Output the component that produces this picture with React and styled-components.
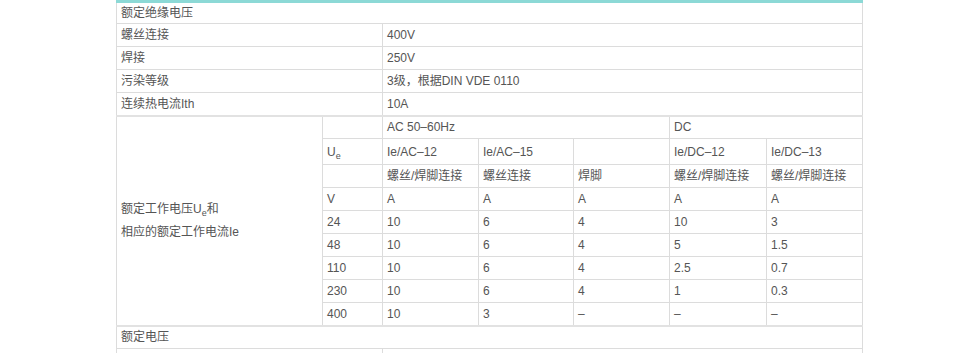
import React from 'react';
import styled, { createGlobalStyle } from 'styled-components';

const GlobalStyle = createGlobalStyle`
  html, body {
    margin: 0;
    padding: 0;
    background: #fff;
  }
  body {
    font-family: 'Liberation Sans', 'Noto Sans CJK SC', sans-serif;
  }
`;

const Page = styled.div`
  padding-left: 116px;
`;

const SpecTable = styled.table`
  width: 746px;
  table-layout: fixed;
  border-collapse: collapse;
  border-top: 3px solid #8cd9d6;
  font-size: 12px;
  color: #555;
`;

const Row = styled.tr`
  height: ${(p) => p.$h || 23}px;
`;

const Cell = styled.td`
  border: 1px solid #dcdcdc;
  border-bottom-width: ${(p) => (p.$thick ? 2 : 1)}px;
  border-bottom-color: ${(p) => (p.$thick ? '#e2e2e2' : '#dcdcdc')};
  padding: 0 4px;
  line-height: 14px;
  vertical-align: middle;
  text-align: left;
  white-space: nowrap;
  overflow: hidden;
`;

const GroupLabel = styled(Cell)`
  line-height: 23px;
`;

const Sub = styled.sub`
  font-size: 9px;
  vertical-align: -3px;
  line-height: 0;
`;

const cols = [206, 60, 96, 95, 96, 97, 96];

const simpleRows = [
  ['螺丝连接', '400V'],
  ['焊接', '250V'],
  ['污染等级', '3级，根据DIN VDE 0110'],
  ['连续热电流Ith', '10A'],
];

const dataRows = [
  ['24', '10', '6', '4', '10', '3'],
  ['48', '10', '6', '4', '5', '1.5'],
  ['110', '10', '6', '4', '2.5', '0.7'],
  ['230', '10', '6', '4', '1', '0.3'],
  ['400', '10', '3', '–', '–', '–'],
];

const Ue = () => (
  <>
    U<Sub>e</Sub>
  </>
);

export default function App() {
  return (
    <Page>
      <GlobalStyle />
      <SpecTable>
        <colgroup>
          {cols.map((w, i) => (
            <col key={i} style={{ width: w }} />
          ))}
        </colgroup>
        <tbody>
          <Row $h={22}>
            <Cell colSpan={7}>额定绝缘电压</Cell>
          </Row>
          {simpleRows.map(([label, value], i) => (
            <Row key={label}>
              <Cell colSpan={2} $thick={i === simpleRows.length - 1}>{label}</Cell>
              <Cell colSpan={5} $thick={i === simpleRows.length - 1}>{value}</Cell>
            </Row>
          ))}

          <Row>
            <GroupLabel rowSpan={dataRows.length + 4} $thick>
              额定工作电压<Ue />和
              <br />
              相应的额定工作电流Ie
            </GroupLabel>
            <Cell />
            <Cell colSpan={3}>AC 50–60Hz</Cell>
            <Cell colSpan={2}>DC</Cell>
          </Row>
          <Row $h={26}>
            <Cell><Ue /></Cell>
            <Cell>Ie/AC–12</Cell>
            <Cell>Ie/AC–15</Cell>
            <Cell />
            <Cell>Ie/DC–12</Cell>
            <Cell>Ie/DC–13</Cell>
          </Row>
          <Row>
            <Cell />
            <Cell>螺丝/焊脚连接</Cell>
            <Cell>螺丝连接</Cell>
            <Cell>焊脚</Cell>
            <Cell>螺丝/焊脚连接</Cell>
            <Cell>螺丝/焊脚连接</Cell>
          </Row>
          <Row>
            <Cell>V</Cell>
            <Cell>A</Cell>
            <Cell>A</Cell>
            <Cell>A</Cell>
            <Cell>A</Cell>
            <Cell>A</Cell>
          </Row>
          {dataRows.map((r, i) => (
            <Row key={r[0]}>
              {r.map((v, j) => (
                <Cell key={j} $thick={i === dataRows.length - 1}>{v}</Cell>
              ))}
            </Row>
          ))}

          <Row>
            <Cell colSpan={7}>额定电压</Cell>
          </Row>
          <Row>
            <Cell colSpan={2} />
            <Cell colSpan={5} />
          </Row>
        </tbody>
      </SpecTable>
    </Page>
  );
}
